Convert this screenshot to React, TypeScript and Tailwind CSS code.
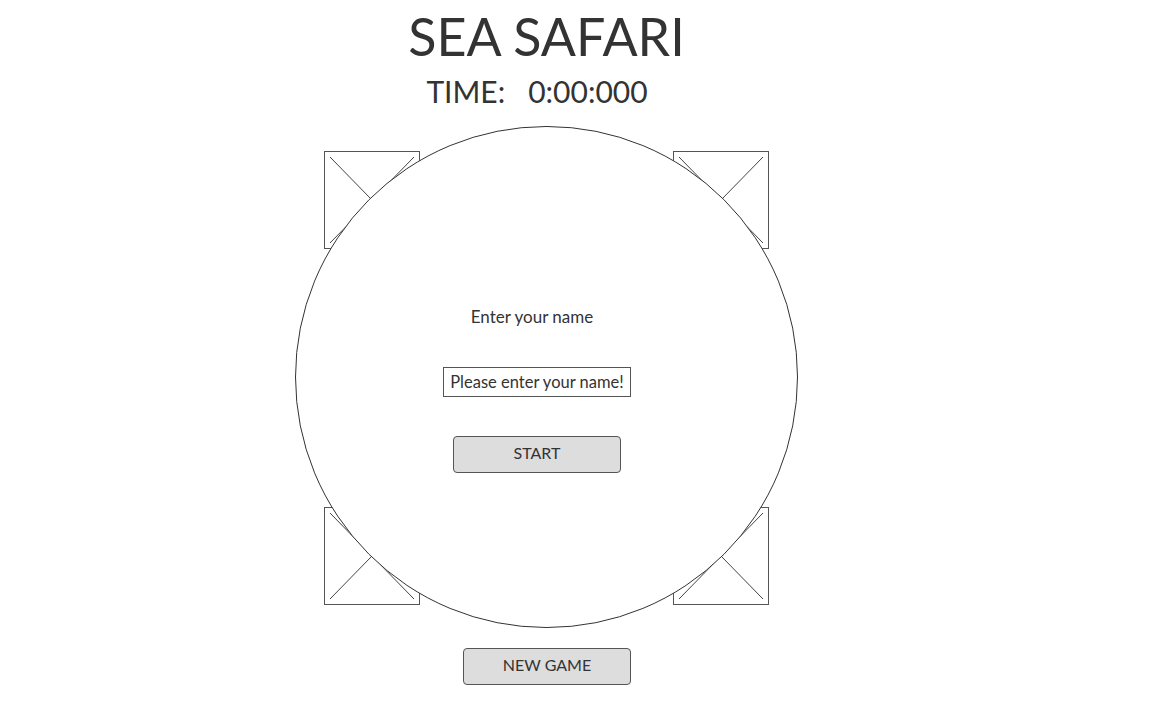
import React from 'react';

const Placeholder: React.FC<{ className: string }> = ({ className }) => (
  <svg className={`absolute ${className}`} width="96" height="98" viewBox="0 0 96 98">
    <rect x="0.5" y="0.5" width="95" height="97" fill="white" stroke="#555" />
    <line x1="6" y1="6" x2="90" y2="92" stroke="#444" />
    <line x1="90" y1="6" x2="6" y2="92" stroke="#444" />
  </svg>
);

const App: React.FC = () => {
  return (
    <div className="min-h-screen bg-white text-[#333] font-['Lato','Liberation_Sans',sans-serif]">
      <div className="ml-[295px] w-[503px] flex flex-col items-center">
        <h1 className="mt-[6px] text-[52px] leading-[60px]">SEA SAFARI</h1>
        <div className="mt-[7px] mb-[1px] text-[30px] leading-[36px] -ml-[19px]">
          TIME:&nbsp;&nbsp;&nbsp;0:00:000
        </div>
        <div className="relative mt-[16px] w-[503px] h-[502px]">
          <Placeholder className="left-[29px] top-[25px]" />
          <Placeholder className="left-[378px] top-[25px]" />
          <Placeholder className="left-[29px] top-[381px]" />
          <Placeholder className="left-[378px] top-[381px]" />
          <div className="relative w-full h-full rounded-full border border-[#333] bg-white flex flex-col items-center pt-[179px]">
            <p className="text-[17px] leading-[22px] -ml-[29px]">Enter your name</p>
            <div className="mt-[39px] -ml-[19px] border border-[#555] px-[6px] h-[30px] flex items-center text-[16.5px]">
              Please enter your name!
            </div>
            <button className="mt-[39px] -ml-[19px] w-[168px] h-[37px] pb-[3px] rounded-[4px] border border-[#555] bg-[#dddddd] text-[16px]">
              START
            </button>
          </div>
        </div>
        <button className="mt-[20px] ml-[1px] w-[168px] h-[37px] pb-[3px] rounded-[4px] border border-[#555] bg-[#dddddd] text-[16px]">
          NEW GAME
        </button>
      </div>
    </div>
  );
};

export default App;
